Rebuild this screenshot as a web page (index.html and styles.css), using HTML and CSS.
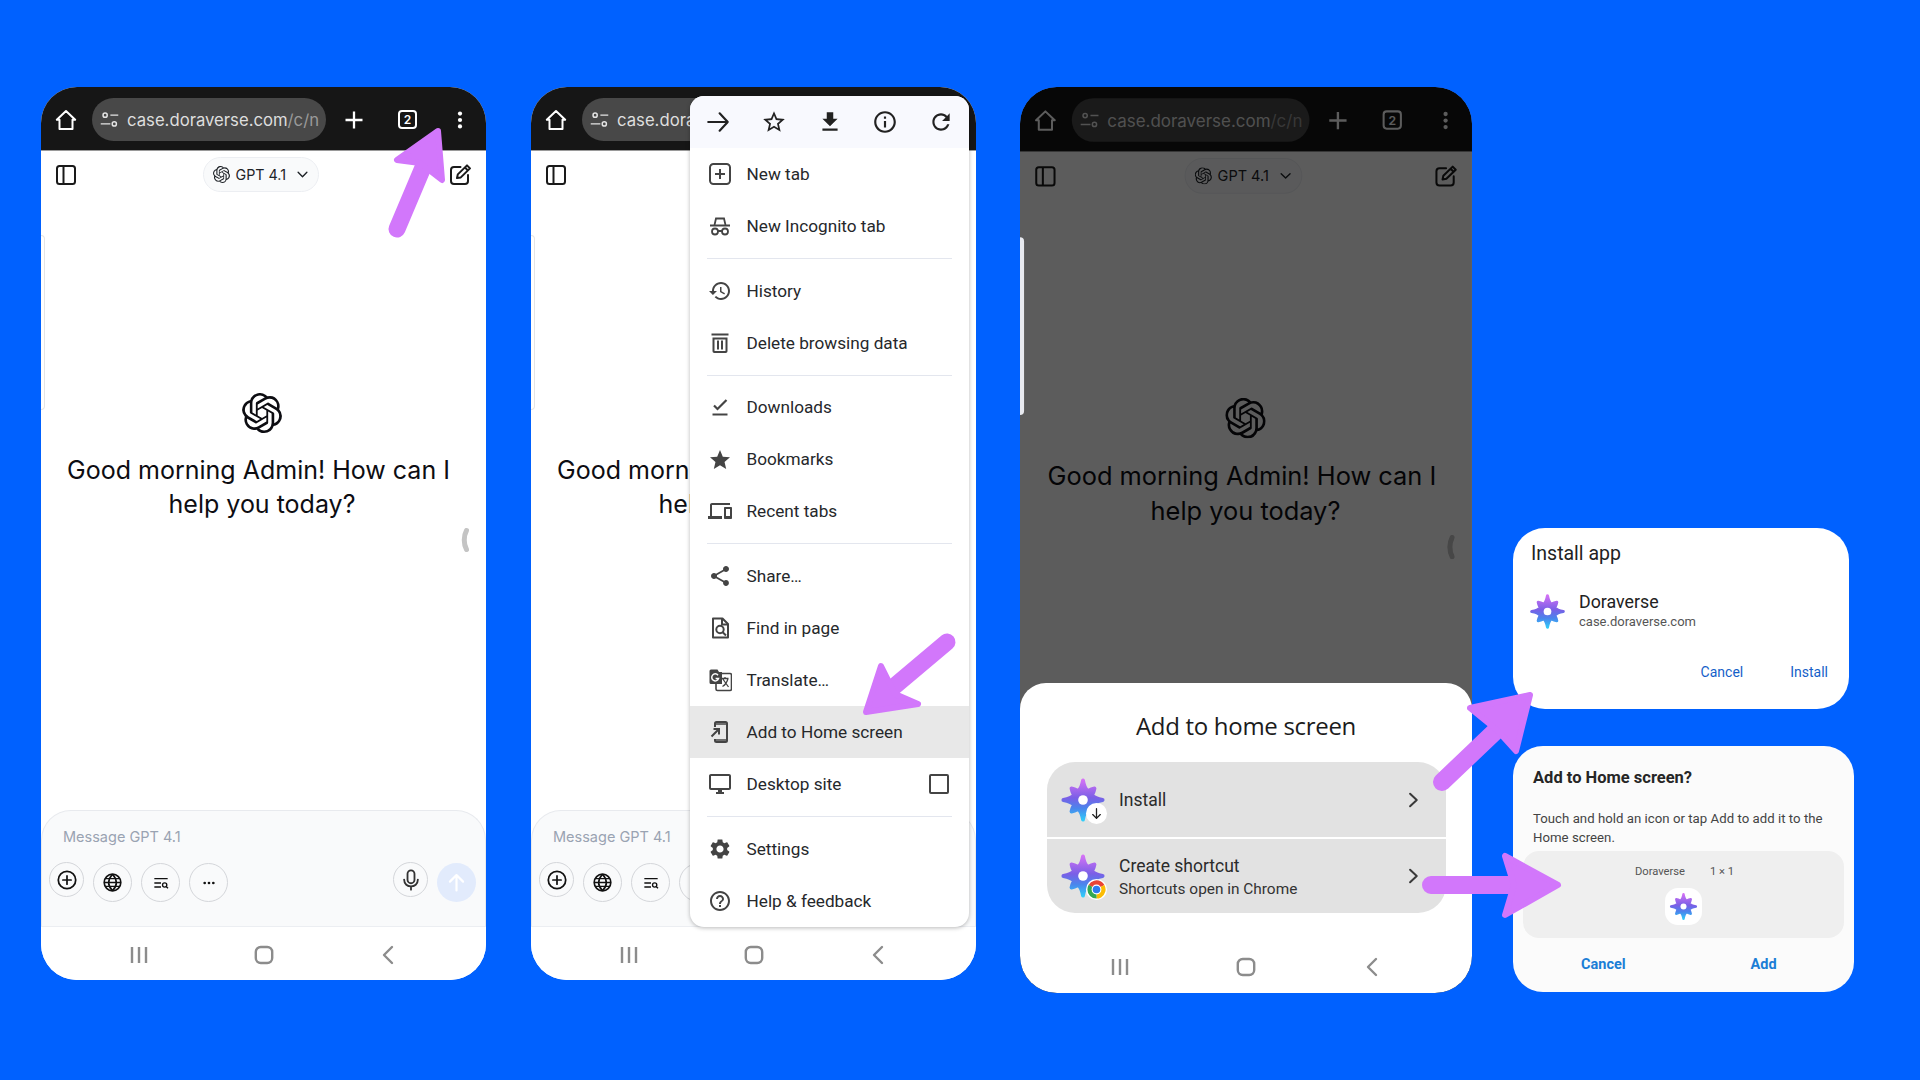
FILE: index.html
```html
<!DOCTYPE html>
<html lang="en">
<head>
<meta charset="utf-8">
<title>Install Doraverse</title>
<link rel="stylesheet" href="styles.css">
</head>
<body>
<svg class="defs" aria-hidden="true">
  <defs>
    <linearGradient id="starGrad" gradientUnits="userSpaceOnUse" x1="24" y1="2" x2="24" y2="46">
      <stop offset="0" stop-color="#d873f6"/><stop offset=".45" stop-color="#7a5fe6"/><stop offset=".7" stop-color="#4a86ec"/><stop offset="1" stop-color="#2fd0fa"/>
    </linearGradient>
    <symbol id="i-star" viewBox="0 0 48 48">
      <path fill="url(#starGrad)" stroke="url(#starGrad)" stroke-width="4" stroke-linejoin="round" d="M24 3.500Q25.500 12 29 14.500Q33 12.500 36 12Q35.500 15 33.500 19Q36 22.500 44.500 24Q36 25.500 33.500 29Q35.500 33 36 36Q33 35.500 29 33.500Q25.500 36 24 44.500Q22.500 36 19 33.500Q15 35.500 12 36Q12.500 33 14.500 29Q12 25.500 3.500 24Q12 22.500 14.500 19Q12.500 15 12 12Q15 12.500 19 14.500Q22.500 12 24 3.500Z"/>
      <circle cx="24" cy="24" r="5" fill="#fff"/>
    </symbol>
    <symbol id="i-openai" viewBox="0 0 24 24"><path fill="currentColor" d="M22.2819 9.8211a5.9847 5.9847 0 0 0-.5157-4.9108 6.0462 6.0462 0 0 0-6.5098-2.9A6.0651 6.0651 0 0 0 4.9807 4.1818a5.9847 5.9847 0 0 0-3.9977 2.9 6.0462 6.0462 0 0 0 .7427 7.0966 5.98 5.98 0 0 0 .511 4.9107 6.051 6.051 0 0 0 6.5146 2.9001A5.9847 5.9847 0 0 0 13.2599 24a6.0557 6.0557 0 0 0 5.7718-4.2058 5.9894 5.9894 0 0 0 3.9977-2.9001 6.0557 6.0557 0 0 0-.7475-7.0729zm-9.022 12.6081a4.4755 4.4755 0 0 1-2.8764-1.0408l.1419-.0804 4.7783-2.7582a.7948.7948 0 0 0 .3927-.6813v-6.7369l2.02 1.1686a.071.071 0 0 1 .038.052v5.5826a4.504 4.504 0 0 1-4.4945 4.4944zm-9.6607-4.1254a4.4708 4.4708 0 0 1-.5346-3.0137l.142.0852 4.783 2.7582a.7712.7712 0 0 0 .7806 0l5.8428-3.3685v2.3324a.0804.0804 0 0 1-.0332.0615L9.74 19.9502a4.4992 4.4992 0 0 1-6.1408-1.6464zM2.3408 7.8956a4.485 4.485 0 0 1 2.3655-1.9728V11.6a.7664.7664 0 0 0 .3879.6765l5.8144 3.3543-2.0201 1.1685a.0757.0757 0 0 1-.071 0l-4.8303-2.7865A4.504 4.504 0 0 1 2.3408 7.872zm16.5963 3.8558L13.1038 8.364 15.1192 7.2a.0757.0757 0 0 1 .071 0l4.8303 2.7913a4.4944 4.4944 0 0 1-.6765 8.1042v-5.6772a.79.79 0 0 0-.407-.667zm2.0107-3.0231l-.142-.0852-4.7735-2.7818a.7759.7759 0 0 0-.7854 0L9.409 9.2297V6.8974a.0662.0662 0 0 1 .0284-.0615l4.8303-2.7866a4.4992 4.4992 0 0 1 6.6802 4.66zM8.3065 12.863l-2.02-1.1638a.0804.0804 0 0 1-.038-.0567V6.0742a4.4992 4.4992 0 0 1 7.3757-3.4537l-.142.0805L8.704 5.459a.7948.7948 0 0 0-.3927.6813zm1.0976-2.3654l2.602-1.4998 2.6069 1.4998v2.9994l-2.5974 1.4997-2.6067-1.4997Z"/></symbol>
    <symbol id="i-home" viewBox="0 0 24 24"><path fill="none" stroke="currentColor" stroke-width="2" stroke-linejoin="round" d="M12 3 2.8 11.8h2.7V21h13V11.8h2.7Z"/></symbol>
    <symbol id="i-tune" viewBox="0 0 24 24"><g fill="none" stroke="currentColor" stroke-width="1.700"><circle cx="7" cy="7" r="2.400"/><circle cx="17.500" cy="17" r="2.400"/><path d="M13 7h9M2 17h11"/></g></symbol>
    <symbol id="i-plus" viewBox="0 0 24 24"><path fill="none" stroke="currentColor" stroke-width="2.300" d="M12 3.500v17M3.500 12h17"/></symbol>
    <symbol id="i-dots" viewBox="0 0 24 24"><g fill="currentColor"><circle cx="12" cy="5" r="2.300"/><circle cx="12" cy="12" r="2.300"/><circle cx="12" cy="19" r="2.300"/></g></symbol>
    <symbol id="i-side" viewBox="0 0 24 24"><g fill="none" stroke="currentColor" stroke-width="2"><rect x="3" y="3" width="18" height="18" rx="2.500"/><path d="M9.500 3v18"/></g></symbol>
    <symbol id="i-edit" viewBox="0 0 24 24"><path fill="none" stroke="currentColor" stroke-width="2" stroke-linecap="round" stroke-linejoin="round" d="M12.500 4H6a3 3 0 0 0-3 3v11a3 3 0 0 0 3 3h11a3 3 0 0 0 3-3v-6M9 15l.8-3.600L19 2.400 22 5.400l-9.200 9ZM17 4.500l2.800 2.900"/></symbol>
    <symbol id="i-chev" viewBox="0 0 24 24"><path fill="none" stroke="currentColor" stroke-width="2.200" stroke-linecap="round" stroke-linejoin="round" d="m5 8.500 7 7 7-7"/></symbol>
    <symbol id="i-cplus" viewBox="0 0 24 24"><g fill="none" stroke="currentColor" stroke-width="1.900" stroke-linecap="round"><circle cx="12" cy="12" r="9.500"/><path d="M12 7.500v9M7.500 12h9"/></g></symbol>
    <symbol id="i-globe" viewBox="0 0 24 24"><g fill="none" stroke="currentColor" stroke-width="1.900"><circle cx="12" cy="12" r="9.500"/><path d="M2.500 12h19M12 2.500c-5.500 6-5.500 13 0 19M12 2.500c5.500 6 5.500 13 0 19"/><path d="M4 7.500h16M4 16.500h16" stroke-width="1.500"/></g></symbol>
    <symbol id="i-lsearch" viewBox="0 0 24 24"><g fill="none" stroke="currentColor" stroke-width="2"><path d="M2 5.500h20M2 12h10M2 18h10"/><circle cx="17.500" cy="15" r="3.200"/><path d="m20 17.500 2.500 2.500"/></g></symbol>
    <symbol id="i-more" viewBox="0 0 24 24"><g fill="currentColor"><circle cx="5.500" cy="12" r="2"/><circle cx="12" cy="12" r="2"/><circle cx="18.500" cy="12" r="2"/></g></symbol>
    <symbol id="i-mic" viewBox="0 0 24 24"><g fill="none" stroke="currentColor" stroke-width="2" stroke-linecap="round"><rect x="8.200" y="1.500" width="7.600" height="14" rx="3.800"/><path d="M4.500 11.500c0 10 15 10 15 0M12 19v3.500"/></g></symbol>
    <symbol id="i-up" viewBox="0 0 24 24"><path fill="none" stroke="currentColor" stroke-width="2.500" stroke-linecap="round" stroke-linejoin="round" d="M12 21V4M4.500 11 12 3.500l7.500 7.500"/></symbol>
    <symbol id="i-arrow" viewBox="0 0 24 24"><path fill="none" stroke="currentColor" stroke-width="2" stroke-linecap="round" stroke-linejoin="round" d="M3 12h18M13.500 4l7.500 8-7.500 8"/></symbol>
    <symbol id="i-staro" viewBox="0 0 24 24"><path fill="currentColor" d="M22 9.240l-7.190-.62L12 2 9.190 8.630 2 9.240l5.460 4.730L5.820 21 12 17.270 18.180 21l-1.630-7.030L22 9.240zM12 15.400l-3.760 2.270 1-4.280-3.320-2.880 4.380-.38L12 6.100l1.710 4.040 4.380.38-3.320 2.880 1 4.280L12 15.400z"/></symbol>
    <symbol id="i-dl" viewBox="0 0 24 24"><path fill="currentColor" d="M19 9h-4V3H9v6H5l7 7 7-7zM5 18v2h14v-2H5z"/></symbol>
    <symbol id="i-info" viewBox="0 0 24 24"><path fill="currentColor" d="M11 7h2v2h-2zm0 4h2v6h-2zm1-9C6.480 2 2 6.480 2 12s4.480 10 10 10 10-4.480 10-10S17.520 2 12 2zm0 18c-4.410 0-8-3.590-8-8s3.590-8 8-8 8 3.590 8 8-3.590 8-8 8z"/></symbol>
    <symbol id="i-reload" viewBox="0 0 24 24"><path fill="currentColor" d="M17.650 6.350C16.200 4.900 14.210 4 12 4c-4.420 0-7.990 3.580-7.990 8s3.570 8 7.990 8c3.730 0 6.840-2.550 7.730-6h-2.080c-.82 2.330-3.040 4-5.650 4-3.310 0-6-2.690-6-6s2.690-6 6-6c1.660 0 3.140.69 4.220 1.780L13 11h7V4l-2.350 2.350z"/></symbol>
    <symbol id="i-newtab" viewBox="0 0 24 24"><g fill="none" stroke="currentColor" stroke-width="2"><rect x="2" y="2" width="20" height="20" rx="3.500"/><path d="M12 7v10M7 12h10"/></g></symbol>
    <symbol id="i-incog" viewBox="0 0 24 24"><g fill="none" stroke="currentColor" stroke-width="1.800"><path d="M6.500 11 8 4.500h8L17.500 11"/><path d="M2 11.500h20" stroke-width="2"/><circle cx="7" cy="17.500" r="3"/><circle cx="17" cy="17.500" r="3"/><path d="M10 17h4"/></g></symbol>
    <symbol id="i-history" viewBox="0 0 24 24"><path fill="currentColor" d="M13 3c-4.970 0-9 4.030-9 9H1l3.890 3.890.07.140L9 12H6c0-3.870 3.130-7 7-7s7 3.130 7 7-3.130 7-7 7c-1.930 0-3.680-.79-4.940-2.060l-1.420 1.420C8.270 19.990 10.510 21 13 21c4.970 0 9-4.030 9-9s-4.030-9-9-9zm-1 5v5l4.280 2.540.72-1.210-3.500-2.080V8H12z"/></symbol>
    <symbol id="i-trash" viewBox="0 0 24 24"><path fill="currentColor" d="M4.500 6.500h15v13.700a1.800 1.800 0 0 1-1.800 1.800H6.300a1.800 1.800 0 0 1-1.800-1.800zm2 2V20h11V8.500zM3.500 2.500h17v2h-17zM9 9.500h2v9H9zm4 0h2v9h-2z"/></symbol>
    <symbol id="i-done" viewBox="0 0 24 24"><path fill="currentColor" d="M4.500 18.500h15v2h-15z"/><path fill="none" stroke="currentColor" stroke-width="2.200" d="m6 10.500 3.500 3.500 9-9"/></symbol>
    <symbol id="i-starf" viewBox="0 0 24 24"><path fill="currentColor" d="M12 18.270 18.180 22l-1.640-7.030L22 10.240l-7.190-.61L12 3 9.190 9.630 2 10.240l5.460 4.730L5.820 22z"/></symbol>
    <symbol id="i-devices" viewBox="0 0 24 24"><path fill="currentColor" d="M4 6h18V4H4c-1.100 0-2 .9-2 2v11H0v3h14v-3H4V6zm19 2h-6c-.55 0-1 .45-1 1v10c0 .55.45 1 1 1h6c.55 0 1-.45 1-1V9c0-.55-.45-1-1-1zm-1 9h-4v-7h4v7z"/></symbol>
    <symbol id="i-share" viewBox="0 0 24 24"><path fill="currentColor" d="M18 16.080c-.76 0-1.440.3-1.960.77L8.910 12.700c.05-.23.09-.46.09-.7s-.04-.47-.09-.7l7.050-4.110c.54.5 1.250.81 2.040.81 1.660 0 3-1.340 3-3s-1.340-3-3-3-3 1.340-3 3c0 .24.04.47.09.7L8.040 9.810C7.500 9.310 6.790 9 6 9c-1.660 0-3 1.340-3 3s1.340 3 3 3c.79 0 1.500-.31 2.040-.81l7.120 4.160c-.05.21-.08.43-.08.65 0 1.610 1.310 2.920 2.920 2.920 1.610 0 2.920-1.310 2.920-2.920s-1.310-2.920-2.920-2.920z"/></symbol>
    <symbol id="i-find" viewBox="0 0 24 24"><g fill="none" stroke="currentColor" stroke-width="2" stroke-linejoin="round"><path d="M5 2.500h9.500L20 8v13.500H5Z"/><circle cx="12" cy="13.500" r="3.700"/><path d="m14.700 16.200 3.300 3.300M14 3v5.500h5.500"/></g></symbol>
    <symbol id="i-translate" viewBox="0 0 24 24"><rect x="8" y="5.500" width="15.500" height="17" rx="1.500" fill="#fff" stroke="currentColor" stroke-width="1.600"/><path d="M1.500 3a1.500 1.500 0 0 1 1.500-1.500h6.500L11 4h3v12H3a1.500 1.500 0 0 1-1.500-1.500Z" fill="currentColor"/><path d="M10 7.200a3.500 3.500 0 1 0 .6 3.200H7.600" fill="none" stroke="#fff" stroke-width="1.500"/><path d="m14.500 10.500 6 8.500M20.500 10.500h-6.500M17 9v1.500M20 10.500c-1 4-3 6.500-5.500 8" fill="none" stroke="currentColor" stroke-width="1.300"/></symbol>
    <symbol id="i-addhome" viewBox="0 0 24 24"><g fill="none" stroke="currentColor" stroke-width="2"><path d="M7 7V3.500A1.500 1.500 0 0 1 8.500 2h9A1.500 1.500 0 0 1 19 3.500v17a1.500 1.500 0 0 1-1.500 1.500h-9A1.500 1.500 0 0 1 7 20.500V19" /><path d="M7 4h12M7 20h12" stroke-width="1.500"/><path d="m3.500 16.500 7-7M5.500 9h5.500v5.500"/></g></symbol>
    <symbol id="i-desktop" viewBox="0 0 24 24"><path fill="currentColor" d="M21 2H3c-1.100 0-2 .9-2 2v12c0 1.100.9 2 2 2h7v2H8v2h8v-2h-2v-2h7c1.100 0 2-.9 2-2V4c0-1.100-.9-2-2-2zm0 14H3V4h18v12z"/></symbol>
    <symbol id="i-gear" viewBox="0 0 24 24"><path fill="currentColor" d="M19.140 12.940c.04-.3.06-.61.06-.94 0-.32-.02-.64-.07-.94l2.030-1.580c.18-.14.23-.41.12-.61l-1.920-3.320c-.12-.22-.37-.29-.59-.22l-2.390.96c-.5-.38-1.030-.7-1.620-.94l-.36-2.540c-.04-.24-.24-.41-.48-.41h-3.840c-.24 0-.43.17-.47.41l-.36 2.540c-.59.24-1.130.57-1.620.94l-2.390-.96c-.22-.08-.47 0-.59.22L2.740 8.870c-.12.21-.08.47.12.61l2.030 1.580c-.05.3-.09.63-.09.94s.02.64.07.94l-2.030 1.580c-.18.14-.23.41-.12.61l1.920 3.320c.12.22.37.29.59.22l2.390-.96c.5.38 1.030.7 1.620.94l.36 2.54c.05.24.24.41.48.41h3.840c.24 0 .44-.17.47-.41l.36-2.540c.59-.24 1.130-.56 1.620-.94l2.390.96c.22.08.47 0 .59-.22l1.920-3.320c.12-.22.07-.47-.12-.61l-2.010-1.580zM12 15.600c-1.980 0-3.600-1.620-3.600-3.600s1.620-3.600 3.600-3.600 3.600 1.620 3.600 3.600-1.620 3.600-3.600 3.600z"/></symbol>
    <symbol id="i-help" viewBox="0 0 24 24"><path fill="currentColor" d="M11 18h2v-2h-2v2zm1-16C6.480 2 2 6.480 2 12s4.480 10 10 10 10-4.480 10-10S17.520 2 12 2zm0 18c-4.410 0-8-3.590-8-8s3.590-8 8-8 8 3.590 8 8-3.590 8-8 8zm0-14c-2.210 0-4 1.790-4 4h2c0-1.100.9-2 2-2s2 .9 2 2c0 2-3 1.750-3 5h2c0-2.250 3-2.500 3-5 0-2.210-1.790-4-4-4z"/></symbol>
    <symbol id="i-navlines" viewBox="0 0 24 24"><path fill="none" stroke="currentColor" stroke-width="2.400" d="M5 4v16M12 4v16M19 4v16"/></symbol>
    <symbol id="i-navhome" viewBox="0 0 24 24"><rect x="3.800" y="4" width="16.400" height="16" rx="5" fill="none" stroke="currentColor" stroke-width="2.400"/></symbol>
    <symbol id="i-navback" viewBox="0 0 24 24"><path fill="none" stroke="currentColor" stroke-width="2.400" stroke-linecap="round" stroke-linejoin="round" d="M16 4 8 12l8 8"/></symbol>
    <symbol id="i-right" viewBox="0 0 24 24"><path fill="none" stroke="currentColor" stroke-width="2.400" stroke-linecap="round" stroke-linejoin="round" d="m8.500 4.500 8 7.500-8 7.500"/></symbol>
    <symbol id="i-handle" viewBox="0 0 8 24"><path fill="none" stroke="currentColor" stroke-width="5" stroke-linecap="round" d="M5.500 2.500C2.500 8 2.500 16 5.500 21.500"/></symbol>
  </defs>
</svg>

<main class="canvas">

  <section class="window win-a">
    <div class="phone">
      <header class="browserbar">
        <svg class="ic home"><use href="#i-home"/></svg>
        <div class="urlpill"><svg class="ic-tune"><use href="#i-tune"/></svg><span class="url">case.doraverse.com<span class="url-path">/c/n</span></span></div>
        <svg class="ic newtab"><use href="#i-plus"/></svg>
        <span class="tabcount">2</span>
        <svg class="ic kebab"><use href="#i-dots"/></svg>
      </header>
      <div class="chat">
        <div class="chathead">
          <svg class="ic-head"><use href="#i-side"/></svg>
          <div class="modelpill"><svg class="ic-model"><use href="#i-openai"/></svg><span>GPT 4.1</span><svg class="ic-chev"><use href="#i-chev"/></svg></div>
          <svg class="ic-head"><use href="#i-edit"/></svg>
        </div>
        <div class="welcome">
          <svg class="logo"><use href="#i-openai"/></svg>
          <h1 class="greeting">Good morning Admin! How can I&nbsp;<br>help you today?</h1>
        </div>
        <div class="composer">
          <div class="placeholder">Message GPT 4.1</div>
          <div class="tools">
            <span class="tool small"><svg><use href="#i-cplus"/></svg></span>
            <span class="tool"><svg><use href="#i-globe"/></svg></span>
            <span class="tool"><svg class="sm"><use href="#i-lsearch"/></svg></span>
            <span class="tool"><svg class="sm"><use href="#i-more"/></svg></span>
            <span class="tool small mic"><svg><use href="#i-mic"/></svg></span>
            <span class="tool send"><svg><use href="#i-up"/></svg></span>
          </div>
        </div>
      </div>
      <nav class="navbar">
        <svg><use href="#i-navlines"/></svg><svg><use href="#i-navhome"/></svg><svg><use href="#i-navback"/></svg>
      </nav>
      <span class="edgetab"></span>
      <svg class="handle"><use href="#i-handle"/></svg>
    </div>
  </section>

  <section class="window win-b">
    <div class="phone">
      <header class="browserbar">
        <svg class="ic home"><use href="#i-home"/></svg>
        <div class="urlpill"><svg class="ic-tune"><use href="#i-tune"/></svg><span class="url">case.doraverse.com<span class="url-path">/c/n</span></span></div>
        <svg class="ic newtab"><use href="#i-plus"/></svg>
        <span class="tabcount">2</span>
        <svg class="ic kebab"><use href="#i-dots"/></svg>
      </header>
      <div class="chat">
        <div class="chathead">
          <svg class="ic-head"><use href="#i-side"/></svg>
          <div class="modelpill"><svg class="ic-model"><use href="#i-openai"/></svg><span>GPT 4.1</span><svg class="ic-chev"><use href="#i-chev"/></svg></div>
          <svg class="ic-head"><use href="#i-edit"/></svg>
        </div>
        <div class="welcome">
          <svg class="logo"><use href="#i-openai"/></svg>
          <h1 class="greeting">Good morning Admin! How can I&nbsp;<br>help you today?</h1>
        </div>
        <div class="composer">
          <div class="placeholder">Message GPT 4.1</div>
          <div class="tools">
            <span class="tool small"><svg><use href="#i-cplus"/></svg></span>
            <span class="tool"><svg><use href="#i-globe"/></svg></span>
            <span class="tool"><svg class="sm"><use href="#i-lsearch"/></svg></span>
            <span class="tool"><svg class="sm"><use href="#i-more"/></svg></span>
            <span class="tool small mic"><svg><use href="#i-mic"/></svg></span>
            <span class="tool send"><svg><use href="#i-up"/></svg></span>
          </div>
        </div>
      </div>
      <nav class="navbar">
        <svg><use href="#i-navlines"/></svg><svg><use href="#i-navhome"/></svg><svg><use href="#i-navback"/></svg>
      </nav>
      <span class="edgetab"></span>

      <div class="menu">
        <div class="menutop">
          <svg><use href="#i-arrow"/></svg><svg><use href="#i-staro"/></svg><svg><use href="#i-dl"/></svg><svg><use href="#i-info"/></svg><svg><use href="#i-reload"/></svg>
        </div>
        <div class="item"><svg><use href="#i-newtab"/></svg>New tab</div>
        <div class="item"><svg><use href="#i-incog"/></svg>New Incognito tab</div>
        <div class="sep"></div>
        <div class="item"><svg><use href="#i-history"/></svg>History</div>
        <div class="item"><svg><use href="#i-trash"/></svg>Delete browsing data</div>
        <div class="sep"></div>
        <div class="item"><svg><use href="#i-done"/></svg>Downloads</div>
        <div class="item"><svg><use href="#i-starf"/></svg>Bookmarks</div>
        <div class="item"><svg><use href="#i-devices"/></svg>Recent tabs</div>
        <div class="sep"></div>
        <div class="item"><svg><use href="#i-share"/></svg>Share…</div>
        <div class="item"><svg><use href="#i-find"/></svg>Find in page</div>
        <div class="item"><svg><use href="#i-translate"/></svg>Translate…</div>
        <div class="item active"><svg><use href="#i-addhome"/></svg>Add to Home screen</div>
        <div class="item"><svg><use href="#i-desktop"/></svg>Desktop site<span class="check"></span></div>
        <div class="sep"></div>
        <div class="item"><svg><use href="#i-gear"/></svg>Settings</div>
        <div class="item"><svg><use href="#i-help"/></svg>Help &amp; feedback</div>
      </div>
    </div>
  </section>

  <section class="window win-c">
    <div class="phone scaled">
      <header class="browserbar">
        <svg class="ic home"><use href="#i-home"/></svg>
        <div class="urlpill"><svg class="ic-tune"><use href="#i-tune"/></svg><span class="url">case.doraverse.com<span class="url-path">/c/n</span></span></div>
        <svg class="ic newtab"><use href="#i-plus"/></svg>
        <span class="tabcount">2</span>
        <svg class="ic kebab"><use href="#i-dots"/></svg>
      </header>
      <div class="chat">
        <div class="chathead">
          <svg class="ic-head"><use href="#i-side"/></svg>
          <div class="modelpill"><svg class="ic-model"><use href="#i-openai"/></svg><span>GPT 4.1</span><svg class="ic-chev"><use href="#i-chev"/></svg></div>
          <svg class="ic-head"><use href="#i-edit"/></svg>
        </div>
        <div class="welcome">
          <svg class="logo"><use href="#i-openai"/></svg>
          <h1 class="greeting">Good morning Admin! How can I&nbsp;<br>help you today?</h1>
        </div>
      </div>
      <svg class="handle"><use href="#i-handle"/></svg>
      <div class="scrim"></div>
      <span class="edgetab bright"></span>
    </div>
    <div class="sheet">
      <h2 class="sheet-title">Add to home screen</h2>
      <div class="options">
        <div class="option">
          <span class="opticon"><svg class="star"><use href="#i-star"/></svg><span class="badge"><svg class="dlbadge" viewBox="0 0 24 24"><path fill="none" stroke="#222" stroke-width="2.400" stroke-linecap="round" stroke-linejoin="round" d="M12 3v18M5 14l7 7 7-7"/></svg></span></span>
          <span class="opttext"><span class="optmain">Install</span></span>
          <svg class="optchev"><use href="#i-right"/></svg>
        </div>
        <div class="option">
          <span class="opticon"><svg class="star"><use href="#i-star"/></svg><span class="badge"><svg class="chrome" viewBox="0 0 24 24"><circle cx="12" cy="12" r="8.500" fill="none" stroke="#ea4335" stroke-width="6" stroke-dasharray="17.800 53.400" transform="rotate(-150 12 12)"/><circle cx="12" cy="12" r="8.500" fill="none" stroke="#fbbc04" stroke-width="6" stroke-dasharray="17.800 53.400" transform="rotate(-30 12 12)"/><circle cx="12" cy="12" r="8.500" fill="none" stroke="#34a853" stroke-width="6" stroke-dasharray="17.800 53.400" transform="rotate(90 12 12)"/><circle cx="12" cy="12" r="6.200" fill="#fff"/><circle cx="12" cy="12" r="4.800" fill="#2f7bf0"/></svg></span></span>
          <span class="opttext"><span class="optmain">Create shortcut</span><span class="optsub">Shortcuts open in Chrome</span></span>
          <svg class="optchev"><use href="#i-right"/></svg>
        </div>
      </div>
      <nav class="navbar sheetnav">
        <svg><use href="#i-navlines"/></svg><svg><use href="#i-navhome"/></svg><svg><use href="#i-navback"/></svg>
      </nav>
    </div>
  </section>

  <section class="window card-install">
    <h3 class="ci-title">Install app</h3>
    <div class="ci-app">
      <svg class="ci-star"><use href="#i-star"/></svg>
      <div class="ci-text"><div class="ci-name">Doraverse</div><div class="ci-url">case.doraverse.com</div></div>
    </div>
    <div class="ci-actions"><span>Cancel</span><span>Install</span></div>
  </section>

  <section class="window card-add">
    <h3 class="ca-title">Add to Home screen?</h3>
    <p class="ca-body">Touch and hold an icon or tap Add to add it to the Home screen.</p>
    <div class="ca-preview">
      <div class="ca-label"><span>Doraverse</span><span>1 × 1</span></div>
      <span class="ca-icon"><svg><use href="#i-star"/></svg></span>
    </div>
    <div class="ca-actions"><span>Cancel</span><span>Add</span></div>
  </section>

  <svg class="arrows" viewBox="0 0 1920 1080" aria-hidden="true">
    <g fill="#d277fb" stroke="#d277fb" stroke-linejoin="round" stroke-linecap="round">
      <path fill="none" stroke-width="17" d="M397 229 427 158"/>
      <path stroke-width="6" d="M438 131 397 160 420 163 442 180Z"/>
      <path fill="none" stroke-width="17" d="M947 642 890 690"/>
      <path stroke-width="6" d="M866 712 881 666 895 694 918 704Z"/>
      <path fill="none" stroke-width="18" d="M1442 782 1505 722"/>
      <path stroke-width="6" d="M1530 695 1470 708 1497 730 1516 751Z"/>
      <path fill="none" stroke-width="18" d="M1431 885H1520"/>
      <path stroke-width="6" d="M1558 885 1505 856 1514 885 1505 915Z"/>
    </g>
  </svg>
</main>
</body>
</html>
```

FILE: styles.css
```css
* { box-sizing: border-box; }
html, body { margin: 0; padding: 0; }
body { background: #0061ff; font-family: "Inter", "Liberation Sans", sans-serif; }
h1, h2, h3, p { margin: 0; font-weight: 400; }
svg { display: block; }
.defs { width: 0; height: 0; position: absolute; }

.canvas { position: relative; width: 1920px; height: 1080px; overflow: hidden; background: #0061ff; }
.window { position: absolute; }
.win-a { left: 41px; top: 87px; width: 445px; height: 893px; }
.win-b { left: 531px; top: 87px; width: 445px; height: 893px; }
.win-c { left: 1020px; top: 87px; width: 452px; height: 906px; border-radius: 37px; overflow: hidden; }
.arrows { position: absolute; left: 0; top: 0; width: 1920px; height: 1080px; pointer-events: none; }

.phone { position: relative; width: 445px; height: 893px; background: #fff; border-radius: 36px; overflow: hidden; display: flex; flex-direction: column; }
.phone.scaled { transform: scale(1.0157); transform-origin: 0 0; }
.phone.scaled .welcome { padding-right: 1px; }

.browserbar { height: 64px; flex: none; background: #161616; border-bottom: 1px solid #9a9a9a; color: #fff; display: flex; align-items: center; padding: 2px 0 0 13px; }
.ic { width: 24px; height: 24px; flex: none; }
.urlpill { width: 234px; height: 43px; margin-left: 14px; border-radius: 22px; background: #484848; display: flex; align-items: center; padding-left: 7px; overflow: hidden; flex: none; color: #e4e4e4; }
.ic-tune { width: 21px; height: 21px; flex: none; }
.url { font-size: 16.7px; margin-left: 7px; white-space: nowrap; color: #dedede; }
.url-path { color: #9a9a9a; }
.newtab { margin-left: 16px; }
.tabcount { width: 19px; height: 19px; margin-left: 32px; border: 2px solid #fff; border-radius: 4px; font-size: 12px; font-weight: 600; display: flex; align-items: center; justify-content: center; flex: none; }
.kebab { margin-left: 32px; width: 22px; height: 22px; }

.chat { flex: 1; min-height: 0; display: flex; flex-direction: column; }
.chathead { height: 41px; padding: 6px 14px 0 13px; display: flex; justify-content: space-between; align-items: center; flex: none; color: #1a1a1a; }
.ic-head { width: 24px; height: 24px; flex: none; }
.modelpill { height: 35px; width: 116px; margin-right: 5px; border: 1px solid #eceef2; border-radius: 18px; background: #f9fafb; display: flex; align-items: center; padding-left: 9px; gap: 6px; font-size: 14.3px; color: #1f2328; flex: none; }
.ic-model { width: 17px; height: 17px; flex: none; }
.ic-chev { width: 15px; height: 15px; margin-left: 3px; flex: none; }

.welcome { flex: 1; min-height: 0; display: flex; flex-direction: column; align-items: center; padding: 201px 3px 0 0; color: #0d0d12; }
.logo { width: 40px; height: 40px; flex: none; }
.greeting { margin-top: 20px; font-size: 25px; line-height: 34px; text-align: center; white-space: nowrap; }

.composer { height: 117px; flex: none; background: #f9fafb; border: 1px solid #e8eaee; border-bottom-color: #eceef2; border-radius: 30px 30px 0 0; padding-top: 16px; }
.placeholder { padding-left: 21px; font-size: 14.5px; line-height: 20px; color: #9aa3b2; }
.tools { display: flex; align-items: center; gap: 9px; padding: 0 9px 0 7px; margin-top: 15px; }
.tool { width: 39px; height: 39px; border: 1px solid #d4d6da; border-radius: 50%; display: flex; align-items: center; justify-content: center; color: #111; flex: none; }
.tool svg { width: 21px; height: 21px; }
.tool svg.sm { width: 16px; height: 16px; }
.tool.small { width: 35px; height: 35px; margin-bottom: 6px; }
.tool.small svg { width: 22px; height: 22px; }
.tool.mic { margin-left: auto; color: #333; }
.tool.send { background: #e2ebfc; border: none; color: #fff; }

.navbar { height: 53px; flex: none; display: flex; justify-content: space-between; align-items: center; padding: 3px 86px 0; color: #8c8c8c; background: #fff; }
.navbar svg { width: 24px; height: 24px; flex: none; }

.edgetab { position: absolute; left: 0; top: 148px; width: 4px; height: 175px; border: 1px solid #e4e4e4; border-left: none; border-radius: 0 4px 4px 0; background: #fff; }
.edgetab.bright { background: #e8eaf0; border: none; width: 4px; }
.handle { position: absolute; left: 420px; top: 441px; width: 8px; height: 24px; color: #c4c4c4; }

.scrim { position: absolute; inset: 0; background: rgba(0, 0, 0, .64); }

.menu { position: absolute; left: 159px; top: 9px; width: 279px; height: 831px; background: #fff; border-radius: 14px; box-shadow: 0 1px 4px rgba(0, 0, 0, .28); overflow: hidden; font-family: "Roboto", "Liberation Sans", sans-serif; display: flex; flex-direction: column; }
.menutop { height: 52px; flex: none; background: #f8f9fe; display: flex; justify-content: space-between; align-items: center; padding: 0 15px 1px; color: #222; }
.menutop svg { width: 26px; height: 26px; flex: none; }
.item { height: 52px; flex: none; display: flex; align-items: center; padding-left: 18px; gap: 14.5px; font-size: 17.2px; color: #26282b; }
.item > svg { width: 24px; height: 24px; flex: none; color: #444; }
.item.active { background: #e8e8e8; }
.sep { height: 12.7px; flex: none; margin: 0 17px; display: flex; align-items: center; }
.sep::after { content: ""; flex: 1; height: 1px; background: #e3e6ee; }
.check { width: 20px; height: 20px; margin-left: auto; margin-right: 20px; border: 2.5px solid #444; border-radius: 2px; }

.sheet { position: absolute; left: 0; right: 0; bottom: 0; height: 310px; background: #fff; border-radius: 26px 26px 37px 37px; display: flex; flex-direction: column; font-family: "Roboto", "Liberation Sans", sans-serif; }
.sheet-title { height: 79px; flex: none; display: flex; align-items: center; justify-content: center; font-family: "Open Sans", "Roboto", sans-serif; font-size: 24px; letter-spacing: -.3px; color: #1c1c1c; padding-top: 5px; }
.options { width: 399px; margin-left: 27px; flex: none; border-radius: 28px; overflow: hidden; display: flex; flex-direction: column; gap: 2px; }
.option { height: 75px; flex: none; background: #e2e2e2; display: flex; align-items: center; padding-left: 13px; }
.option + .option { height: 74px; }
.opticon { position: relative; width: 46px; height: 46px; flex: none; }
.star { width: 46px; height: 46px; }
.badge { position: absolute; left: 26px; top: 26px; width: 21px; height: 21px; border-radius: 50%; background: #fff; display: flex; align-items: center; justify-content: center; }
.dlbadge { width: 13px; height: 13px; }
.chrome { width: 19px; height: 19px; }
.opttext { margin-left: 13px; flex: 1; display: flex; flex-direction: column; gap: 2px; padding-top: 2px; color: #2b2b2b; }
.optmain { font-size: 17.5px; line-height: 21px; }
.optsub { font-size: 15.4px; line-height: 20px; color: #333; }
.optchev { width: 20px; height: 20px; margin-right: 23px; color: #3a3a3a; flex: none; }
.sheetnav { margin-top: auto; padding: 0 88px 0; height: 52px; background: transparent; }

.card-install { left: 1513px; top: 528px; width: 336px; height: 181px; background: #fff; border-radius: 32px; font-family: "Roboto", "Liberation Sans", sans-serif; padding: 15px 21px 0 18px; display: flex; flex-direction: column; }
.ci-title { font-size: 19.5px; line-height: 22px; color: #222; }
.ci-app { display: flex; align-items: center; margin-top: 27px; gap: 13px; margin-left: -2px; }
.ci-star { width: 37px; height: 37px; flex: none; }
.ci-name { font-size: 17.8px; line-height: 20px; color: #222; }
.ci-url { margin-top: 2px; font-size: 13px; line-height: 16px; color: #555; }
.ci-actions { display: flex; justify-content: flex-end; gap: 47px; margin-top: 34px; font-size: 14px; line-height: 16px; color: #155fc9; }

.card-add { left: 1513px; top: 746px; width: 341px; height: 246px; background: #fbfbfb; border-radius: 30px; font-family: "Roboto", "Liberation Sans", sans-serif; padding: 22px 10px 0; display: flex; flex-direction: column; }
.ca-title { font-size: 16.5px; line-height: 20px; font-weight: 700; color: #262626; padding-left: 10px; }
.ca-body { margin-top: 21px; padding: 0 10px; font-size: 13.2px; line-height: 19px; letter-spacing: .03px; color: #444; }
.ca-preview { margin-top: 4px; height: 87px; background: #efefef; border-radius: 16px; display: flex; flex-direction: column; align-items: center; padding-top: 14px; }
.ca-label { display: flex; gap: 25px; font-size: 11.2px; line-height: 14px; color: #555; margin-left: 2px; }
.ca-icon { width: 37px; height: 37px; margin-top: 9px; border-radius: 13px; background: #fff; display: flex; align-items: center; justify-content: center; }
.ca-icon svg { width: 29px; height: 29px; }
.ca-actions { display: flex; gap: 125px; margin-top: 18px; padding-left: 58px; font-size: 14.5px; line-height: 17px; font-weight: 700; color: #1c7ed6; }
```
